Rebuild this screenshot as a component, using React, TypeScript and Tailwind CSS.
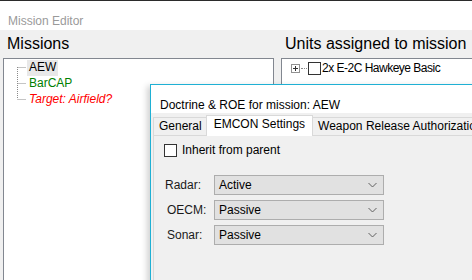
import React from "react"

function Chevron() {
  return (
    <svg width="9" height="6" viewBox="0 0 9 6" className="shrink-0">
      <path d="M0.5 1 L4.5 5 L8.5 1" fill="none" stroke="#606060" strokeWidth="1" />
    </svg>
  )
}

function Combo({ label, value, pad }: { label: string; value: string; pad: string }) {
  return (
    <div className="flex items-center h-5">
      <div className={`w-[50px] text-[12px] leading-4 text-[#1a1a1a] ${pad}`}>{label}</div>
      <div className="w-[170px] h-5 flex items-center justify-between border border-[#adadad] bg-[#e1e1e1] pl-[4px] pr-[6px]">
        <span className="text-[12px] leading-4 text-black">{value}</span>
        <Chevron />
      </div>
    </div>
  )
}

export default function App() {
  return (
    <div className="relative w-[472px] h-[280px] overflow-hidden bg-[#f0f0f0] font-['Liberation_Sans',Arial,sans-serif]">
      {/* window title */}
      <div className="h-[30px] border-t border-[#2b2b2b] bg-white pl-2 pt-[7px]">
        <span className="text-[12px] leading-4 text-[#9a9a9a]">Mission Editor</span>
      </div>

      <div className="flex gap-[7px] pl-[3px]">
        {/* missions */}
        <div className="w-[271px] shrink-0">
          <div className="pl-1 pt-[4px] h-[28px] text-[16px] leading-5 text-black">Missions</div>
          <div className="h-[240px] border border-[#828790] bg-white pt-[1px]">
            <div className="flex">
              <svg width="23" height="48" className="shrink-0">
                <path d="M13.5 7 V39 M13.5 7.5 H22 M13.5 23.5 H22 M13.5 39.5 H22" stroke="#8a8a8a" strokeWidth="1" strokeDasharray="1 1" fill="none" />
              </svg>
              <div className="flex flex-col">
                <div className="h-4 leading-[15px] text-[12px] text-black bg-[#e8e8e8] px-[2px] w-fit">AEW</div>
                <div className="h-4 leading-[15px] text-[12px] text-[#008000] px-[2px]">BarCAP</div>
                <div className="h-4 leading-[15px] text-[12px] text-[#ff0000] italic px-[2px]">Target: Airfield?</div>
              </div>
            </div>
          </div>
        </div>

        {/* units */}
        <div className="w-[200px] shrink-0">
          <div className="pl-1 pt-[4px] h-[28px] text-[16px] leading-5 text-black whitespace-nowrap">Units assigned to mission</div>
          <div className="h-[240px] border border-[#828790] bg-white pl-[9px] pt-[2px]">
            <div className="flex items-center h-[14px]">
              <div className="w-[9px] h-[9px] border border-[#919191] flex items-center justify-center">
                <svg width="7" height="7" viewBox="0 0 7 7">
                  <path d="M1 3.5 H6 M3.5 1 V6" stroke="#333" strokeWidth="1" />
                </svg>
              </div>
              <div className="w-[6px] border-t border-dotted border-[#8a8a8a] mx-[1px]" />
              <div className="w-[13px] h-[13px] border border-[#333] bg-white" />
              <span className="ml-[1px] text-[12px] leading-4 tracking-[-0.5px] text-black whitespace-nowrap">2x E-2C Hawkeye Basic</span>
            </div>
          </div>
        </div>
      </div>

      {/* doctrine dialog */}
      <div className="absolute left-[150px] top-[84px] w-[340px] h-[220px] border border-[#1fb0d4] bg-[#f0f0f0] shadow-[-3px_2px_6px_rgba(0,0,0,0.18)]">
        <div className="h-[28px] bg-white pl-[9px] pt-[7px]">
          <span className="text-[12px] leading-4 text-black whitespace-nowrap">Doctrine &amp; ROE for mission: AEW</span>
        </div>
        <div className="pl-[2px] pt-[2px]">
          <div className="flex items-end">
            <div className="h-[18px] border-l border-t border-[#d9d9d9] bg-[#f0f0f0] pl-[5px] pr-[4px] text-[12px] leading-4 text-black">General</div>
            <div className="relative z-10 -mb-px h-[21px] border-x border-t border-[#d9d9d9] bg-white pl-[7px] pr-[7px] text-[12px] leading-4 text-black">EMCON Settings</div>
            <div className="h-[18px] border-t border-r border-[#d9d9d9] bg-[#f0f0f0] pl-[5px] pr-[4px] text-[12px] leading-4 text-black whitespace-nowrap">Weapon Release Authorization</div>
          </div>
          <div className="h-[160px] border-l border-t border-[#d9d9d9] bg-[#f0f0f0] pl-[10px] pt-[6px]">
            <div className="flex items-center gap-[5px]">
              <div className="w-[13px] h-[13px] border border-[#333] bg-white" />
              <span className="text-[12px] leading-4 text-black">Inherit from parent</span>
            </div>
            <div className="mt-[17px] flex flex-col gap-[5px]">
              <Combo label="Radar:" value="Active" pad="pl-[1px]" />
              <Combo label="OECM:" value="Passive" pad="pl-[3px]" />
              <Combo label="Sonar:" value="Passive" pad="pl-[3px]" />
            </div>
          </div>
        </div>
      </div>
    </div>
  )
}
